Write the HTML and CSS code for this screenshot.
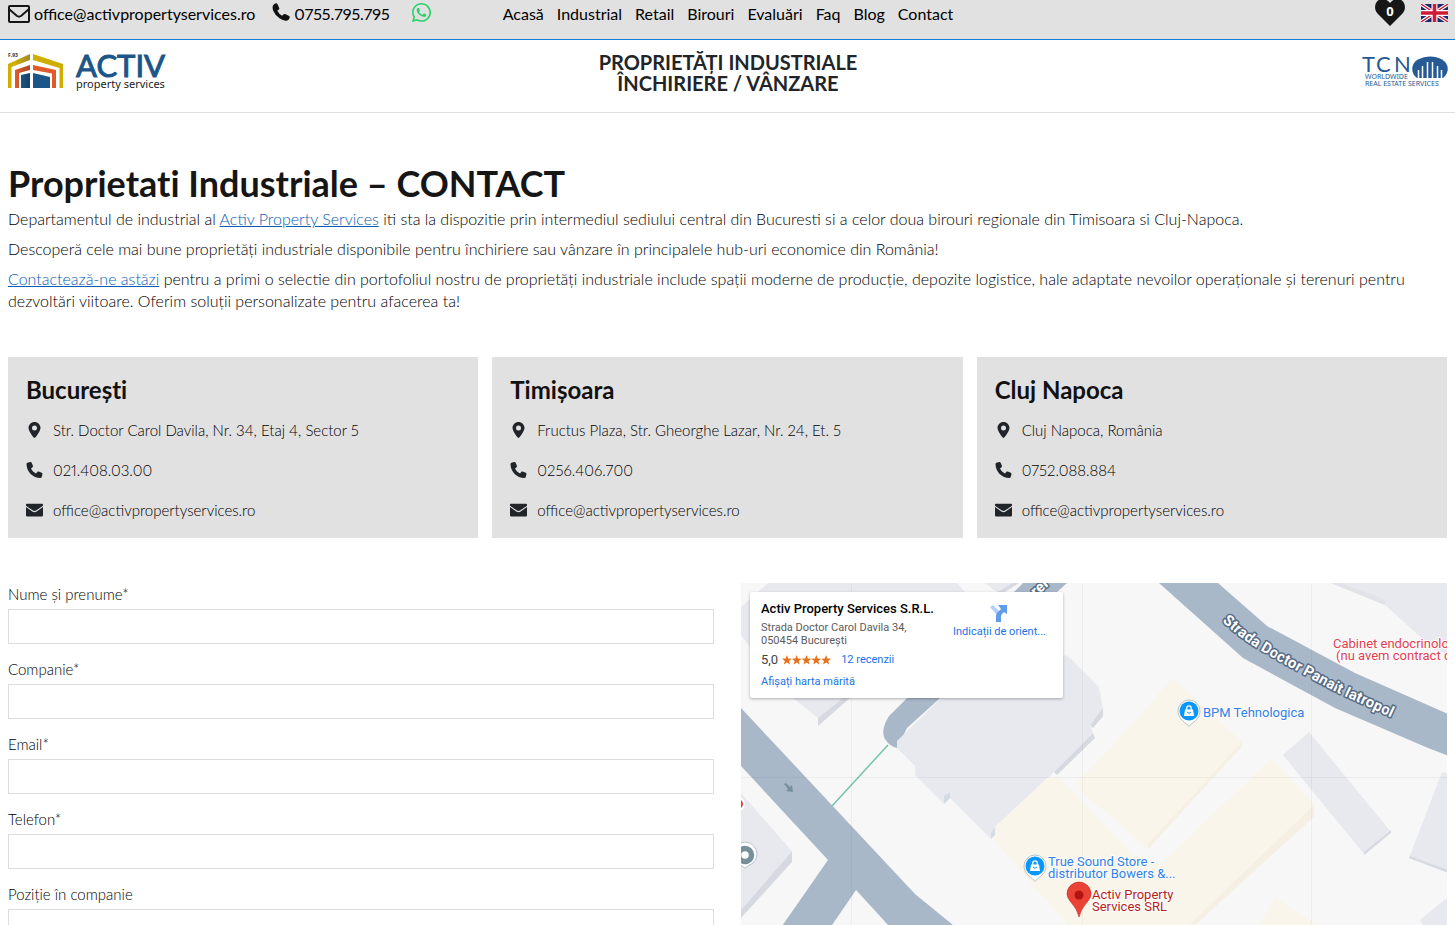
FILE: index.html
```html
<!DOCTYPE html>
<html lang="ro">
<head>
<meta charset="utf-8">
<meta name="viewport" content="width=device-width, initial-scale=1">
<title>Proprietati Industriale – Contact</title>
<link rel="stylesheet" href="styles.css">
</head>
<body>
<svg class="defs" aria-hidden="true">
  <symbol id="phone" viewBox="0 0 512 512"><path d="M164.900 24.600c-7.700-18.600-28-28.500-47.400-23.200l-88 24C12.100 30.200 0 46 0 64c0 247.400 200.600 448 448 448 18 0 33.800-12.100 38.600-29.500l24-88c5.300-19.400-4.600-39.700-23.200-47.400l-96-40c-16.300-6.800-35.200-2.100-46.300 11.600L304.700 368C234.300 334.700 177.300 277.700 144 207.300l49.300-40.300c13.700-11.200 18.400-30 11.600-46.300z"/></symbol>
  <symbol id="handset" viewBox="0 0 18 18"><path d="M1 2.500Q2 .5 4 .3q1-.1 1.400.8l1.800 3.900q.4.900-.3 1.500L5.300 7.800q1.500 3.200 4.900 5l1.500-1.500q.6-.6 1.400-.2l4 2q.8.400.6 1.400-.5 2.300-2.500 3-3.200 1-7.700-2.200Q3 12 1.200 7.700.1 4.500 1 2.500z"/></symbol>
  <symbol id="pin" viewBox="0 0 384 512"><path fill-rule="evenodd" d="M215.700 499.200C267 435 384 279.400 384 192 384 86 298 0 192 0S0 86 0 192c0 87.400 117 243 168.300 307.200 12.300 15.300 35.100 15.300 47.400 0zM192 112a80 80 0 1 1 0 160 80 80 0 0 1 0-160z"/></symbol>
  <symbol id="mail" viewBox="0 0 512 384"><path d="M24 0Q0 0 0 24v38l210 148q46 30 92 0L512 62V24q0-24-24-24zM0 100v260q0 24 24 24h464q24 0 24-24V100L322 236q-66 42-132 0z"/></symbol>
  <symbol id="shop" viewBox="0 0 24 28"><path d="M12 27.500C10.500 24.500 1 21 1 12a11 11 0 0 1 22 0c0 9-9.500 12.500-11 15.500z" fill="#fff" stroke="#b9c3cc" stroke-width="1"/><circle cx="12" cy="12" r="9.500" fill="#0a96fa"/><path d="M8 10.500h8l1 6.500H7z" fill="#fff"/><path d="M9.800 11V9a2.200 2.200 0 0 1 4.400 0v2" fill="none" stroke="#fff" stroke-width="1.300"/><path d="M10 13q2 2.500 4 0" fill="none" stroke="#0a96fa"/></symbol>
</svg>

<header>
  <div class="topbar">
    <div class="contacts">
      <a class="contact-link" href="mailto:office@activpropertyservices.ro">
        <svg class="i-mail" viewBox="0 0 22 20"><rect x="1" y="2" width="20" height="16" rx="1"/><path d="M1.500 5.500l7.500 6.500q2 1.300 4 0l7.500-6.500"/></svg>
        <span>office@activpropertyservices.ro</span>
      </a>
      <a class="contact-link" href="tel:0755795795">
        <svg class="i-phone"><use href="#handset"/></svg>
        <span>0755.795.795</span>
      </a>
      <a class="whatsapp" href="#wa" aria-label="WhatsApp">
        <svg viewBox="0 0 448 448"><path fill="#25d366" d="M380.900 65.100C339 23.100 283.200 0 223.900 0 101.500 0 1.900 99.600 1.900 222c0 39.100 10.200 77.300 29.600 111L0 448l117.700-30.900c32.400 17.700 68.900 27 106.100 27h.1c122.300 0 224.100-99.600 224.100-222 0-59.300-25.200-115-67.100-157zM223.900 406.700c-33.200 0-65.700-8.900-94-25.700l-6.700-4-69.800 18.300L72 327.200l-4.400-7c-18.500-29.400-28.200-63.300-28.200-98.200 0-101.700 82.800-184.500 184.600-184.500 49.300 0 95.600 19.200 130.400 54.100s56.200 81.200 56.100 130.500c0 101.800-84.900 184.600-186.600 184.600zm101.200-138.200c-5.500-2.800-32.800-16.200-37.900-18-5.100-1.900-8.800-2.800-12.500 2.800s-14.300 18-17.600 21.800c-3.200 3.700-6.500 4.200-12 1.400-32.600-16.300-54-29.100-75.500-66-5.700-9.800 5.700-9.100 16.300-30.300 1.800-3.700.9-6.900-.5-9.700s-12.500-30.100-17.100-41.200c-4.500-10.800-9.100-9.300-12.500-9.500-3.200-.2-6.900-.2-10.600-.2s-9.700 1.400-14.800 6.900c-5.100 5.600-19.400 19-19.400 46.300s19.900 53.700 22.600 57.400c2.800 3.700 39.100 59.700 94.800 83.800 35.200 15.200 49 16.500 66.600 13.900 10.700-1.600 32.800-13.400 37.400-26.400s4.600-24.100 3.200-26.400c-1.300-2.500-5-3.900-10.500-6.600z"/></svg>
      </a>
    </div>
    <nav class="menu">
      <a href="#acasa">Acasă</a><a href="#industrial">Industrial</a><a href="#retail">Retail</a><a href="#birouri">Birouri</a><a href="#evaluari">Evaluări</a><a href="#faq">Faq</a><a href="#blog">Blog</a><a href="#contact">Contact</a>
    </nav>
    <div class="tools">
      <a class="heart" href="#favorite" aria-label="Favorite">
        <svg viewBox="0 0 30 26"><path fill="#161616" d="M15 26L2.500 13.500C-1 10-.5 4 2.500 1S11-2 15 3c4-5 9.500-5 12.500-2s3.500 9 0 12.500z"/><text class="heart-count" x="15" y="16" text-anchor="middle">0</text></svg>
      </a>
      <a class="flag" href="#en" aria-label="English">
        <svg viewBox="0 0 27 18"><path fill="#1b2a6b" d="M0 0h27v18H0z"/><path stroke="#fff" stroke-width="3.600" d="M0 0l27 18M27 0L0 18"/><path stroke="#cf1b36" stroke-width="1.400" d="M0 0l27 18M27 0L0 18"/><path stroke="#fff" stroke-width="6" d="M13.500 0v18M0 9h27"/><path stroke="#cf1b36" stroke-width="3.600" d="M13.500 0v18M0 9h27"/></svg>
      </a>
    </div>
  </div>
  <div class="brandbar">
    <a class="logo" href="#acasa" aria-label="Activ Property Services">
      <svg viewBox="0 0 160 40">
        <defs>
          <linearGradient id="gold"><stop offset="0" stop-color="#cfae00"/><stop offset=".3" stop-color="#cfae00"/><stop offset="1" stop-color="#a08a28"/></linearGradient>
          <linearGradient id="rust"><stop offset="0" stop-color="#e05a2b"/><stop offset="1" stop-color="#a9492a"/></linearGradient>
          <linearGradient id="navy"><stop offset="0" stop-color="#1c5587"/><stop offset="1" stop-color="#173f63"/></linearGradient>
        </defs>
        <path fill="url(#gold)" d="M0 12L22 2v6L3.500 15v21H0z"/>
        <path fill="#cfae00" d="M25 2l30 10v24h-3.500V16L25 8z"/>
        <path fill="url(#rust)" d="M7 18l15-5v5l-11 3v15H7z"/>
        <path fill="#e05a2b" d="M25 13l23 5v18h-4V21.500L25 18z"/>
        <path fill="url(#navy)" d="M13 23l9-2v15h-9z"/>
        <path fill="#1c5587" d="M25 21l17 4v11H25z"/>
        <text class="logo-year" x="0" y="5">F.93</text>
        <text class="logo-name" x="68" y="25">ACTIV</text>
        <text class="logo-sub" x="68" y="36">property services</text>
      </svg>
    </a>
    <div class="tagline">PROPRIETĂȚI INDUSTRIALE<br>ÎNCHIRIERE / VÂNZARE</div>
    <a class="tcn" href="#tcn" aria-label="TCN Worldwide">
      <svg viewBox="0 0 88 36">
        <text class="tcn-name" x="2" y="20">T</text><text class="tcn-name" x="16" y="20">C</text><text class="tcn-name" x="34" y="20">N</text>
        <path fill="#265a94" d="M57 26C50 21 51 11 58 7.500c8-4 17-4 24 0 7 4 8 13 1 18.500z"/>
        <path stroke="#fff" stroke-width="1.500" fill="none" d="M58.500 27V18M62.500 27V14M67.500 27V10M72.500 27V10M77.500 27V14M81.500 27V18"/>
        <text class="tcn-sub" x="5" y="27">WORLDWIDE</text>
        <text class="tcn-sub" x="5" y="34">REAL ESTATE SERVICES</text>
      </svg>
    </a>
  </div>
</header>

<main>
  <section class="intro">
    <h1>Proprietati Industriale – CONTACT</h1>
    <p>Departamentul de industrial al <a href="#aps">Activ Property Services</a> iti sta la dispozitie prin intermediul sediului central din Bucuresti si a celor doua birouri regionale din Timisoara si Cluj-Napoca.</p>
    <p>Descoperă cele mai bune proprietăți industriale disponibile pentru închiriere sau vânzare în principalele hub-uri economice din România!</p>
    <p><a href="#contact">Contactează-ne astăzi</a> pentru a primi o selectie din portofoliul nostru de proprietăți industriale include spații moderne de producție, depozite logistice, hale adaptate nevoilor operaționale și terenuri pentru dezvoltări viitoare. Oferim soluții personalizate pentru afacerea ta!</p>
  </section>

  <section class="offices">
    <article class="office">
      <h2>București</h2>
      <ul>
        <li><svg><use href="#pin"/></svg>Str. Doctor Carol Davila, Nr. 34, Etaj 4, Sector 5</li>
        <li><svg><use href="#phone"/></svg>021.408.03.00</li>
        <li><svg><use href="#mail"/></svg>office@activpropertyservices.ro</li>
      </ul>
    </article>
    <article class="office">
      <h2>Timișoara</h2>
      <ul>
        <li><svg><use href="#pin"/></svg>Fructus Plaza, Str. Gheorghe Lazar, Nr. 24, Et. 5</li>
        <li><svg><use href="#phone"/></svg>0256.406.700</li>
        <li><svg><use href="#mail"/></svg>office@activpropertyservices.ro</li>
      </ul>
    </article>
    <article class="office">
      <h2>Cluj Napoca</h2>
      <ul>
        <li><svg><use href="#pin"/></svg>Cluj Napoca, România</li>
        <li><svg><use href="#phone"/></svg>0752.088.884</li>
        <li><svg><use href="#mail"/></svg>office@activpropertyservices.ro</li>
      </ul>
    </article>
  </section>

  <section class="reach">
    <form class="form">
      <div class="field"><label for="nume">Nume și prenume*</label><input id="nume" type="text"></div>
      <div class="field"><label for="companie">Companie*</label><input id="companie" type="text"></div>
      <div class="field"><label for="email">Email*</label><input id="email" type="email"></div>
      <div class="field"><label for="telefon">Telefon*</label><input id="telefon" type="tel"></div>
      <div class="field"><label for="pozitie">Poziție în companie</label><input id="pozitie" type="text"></div>
    </form>
    <div class="map">
      <svg class="map-canvas" role="img" aria-label="Hartă">
        <g fill="#e8e9ef">
          <path d="M27 0H216l14 16L9 64 0 52V24zM52 115l25 20 25-20zM244 0l12 9 16-9z"/>
          <path d="M0 210l51 58-51 59z"/>
          <path d="M590 0l54 22 50 45 60 20V0z"/>
          <path d="M542 172l26-23 82 100-27 22z"/>
          <path d="M701 189l60 20v100l-93-34zM707 314l-28 23 3 6 25 30z"/>
        </g>
        <g fill="#d7d9e1">
          <path d="M77 135l25-20h7l-32 28zM51 268v11L0 335v-8zM256 9l16-9h6l-14 9zM623 269l27-22v3l-27 22zM668 275l1-2 38 14v3z"/>
        </g>
        <path fill="#e2e3e9" d="M590 0h10l45 17-1 5z"/>
        <path fill="#a9b8c9" d="M0 125l174 186 38 31 78 60h-88l-87-95-65 95H0l87-125L0 183z"/>
        <path fill="#a9b8c9" d="M282 0L148 133q-9 14-4 23 5 8 12 9l10-20L326 0z"/>
        <path fill="#a9b8c9" d="M418 0l84 75 92 50 93 40 80 30v-40l-60-24-93-41-88-47L477 0z"/>
        <path fill="#e8e9ef" d="M156 158l44-43 122-43 5 1 31 31 4 22-8 9-5 7 3 8-39 39-59 55-4 12-41-41-6 6-29-29v-9l-18-18z"/>
        <path fill="#d7d9e1" d="M313 189l39-39 2 5-38 37zM349 142l13-17v8l-10 12z"/>
        <path fill="#d3dce5" d="M203 221v-8l6-4v6zM250 256v-6l4-6v8z"/>
        <g fill="#f9f5ea">
          <path d="M306 195h13l73 77 29 8 110-105 42 47v12L454 342l-60 60h-14L254 259v-15z"/>
          <path d="M432 95l69 64v4l-94 103-53-46-13-11q-5-7-3-12l16-15z"/>
          <path d="M534 314l60 40-80 60-10-45z"/>
        </g>
        <path fill="#f5f0e3" d="M573 222v12L454 342l-60 60h-14l68-60zM501 159v4l-94 103v-5z"/>
        <path stroke="#74c3ae" stroke-width="1.500" d="M91 223l56-61"/>
        <path stroke="#000" stroke-opacity=".04" d="M110.500 0v500M341.500 0v500M570.500 0v500M0 194.500h1000"/>
        <path fill="#78909c" d="M43 201l2-1 4 4 2-2 1 7-7-1 2-2z"/>
        <circle cx="-3" cy="221" r="6" fill="#e8384a" stroke="#fff" stroke-width="2"/>
        <path d="M4 285l-8-5a12 12 0 1 1 16 0z" fill="#fff" stroke="#b9c3cc"/>
        <circle cx="4" cy="272" r="6.500" fill="#fff" stroke="#78909c" stroke-width="5.500"/>
        <path id="street" fill="none" d="M481 38Q498 54 514 64T556 88L597 110 680 148"/>
        <text class="street-name"><textPath href="#street">Strada Doctor Panait Iatropol</textPath></text>
        <text class="street-name" transform="translate(295 14) rotate(-42)">rei</text>
        <use href="#shop" x="436" y="116" width="24" height="28"/>
        <use href="#shop" x="282" y="271" width="24" height="28"/>
        <g class="poi poi-blue"><text x="462" y="134">BPM Tehnologica</text><text x="307" y="283">True Sound Store -</text><text x="307" y="295">distributor Bowers &amp;...</text></g>
        <g class="poi poi-red"><text x="592" y="65">Cabinet endocrinologie</text><text x="595" y="77">(nu avem contract cu</text></g>
        <g class="poi poi-dark"><text x="351" y="316">Activ Property</text><text x="351" y="328">Services SRL</text></g>
        <path d="M338 334q-2-8-7-13.500-5-5.500-5-9.500a12 12 0 0 1 24 0q0 4-5 9.500-5 5.500-7 13.500z" fill="#ea4335" stroke="#c5221f" stroke-width=".6"/>
        <circle cx="338" cy="312" r="4.500" fill="#b31412"/>
      </svg>
      <div class="place">
        <div class="place-info">
          <strong>Activ Property Services S.R.L.</strong>
          <address>Strada Doctor Carol Davila 34,<br>050454 București</address>
          <div class="rating"><span>5,0</span>
            <svg viewBox="0 0 50 10"><defs><path id="star" d="M5 0l1.300 3.400 3.700.2-2.900 2.300 1 3.600L5 7.500 1.900 9.500l1-3.600L0 3.600l3.700-.2z"/></defs><g fill="#e7711b"><use href="#star"/><use href="#star" x="10"/><use href="#star" x="20"/><use href="#star" x="30"/><use href="#star" x="40"/></g></svg>
            <a href="#recenzii">12 recenzii</a></div>
          <a href="#harta">Afișați harta mărită</a>
        </div>
        <a class="directions" href="#traseu">
          <svg viewBox="0 0 18 18"><path fill="#b4d0f7" d="M0 3l3-2 7 7-3 3z"/><path fill="#5f9ceb" d="M6 18v-6q0-2 2-4l3-3-3-4h9v9l-3-2-2 2q-1 1-1 3v5z"/></svg>
          <span>Indicații de orient...</span>
        </a>
      </div>
    </div>
  </section>
</main>
</body>
</html>
```
FILE: styles.css
```css
* { box-sizing: border-box; }
html { height: 100%; }
body {
  margin: 0;
  height: 100vh;
  overflow-y: auto;
  scrollbar-width: none;
  background: #fff;
  color: #000;
  font: 300 15px/22px Lato, "Open Sans", sans-serif;
  font-variant-numeric: proportional-nums;
}
a { color: inherit; text-decoration: none; }
.defs { position: absolute; width: 0; height: 0; }

.topbar {
  display: grid;
  grid-template-columns: 1fr auto 1fr;
  height: 40px;
  padding: 0 7px 0 8px;
  background: #e1e1e1;
  border-bottom: 1px solid #137ce0;
  font-weight: 400;
  font-size: 16px;
}
.contacts { display: flex; align-items: flex-start; padding-top: 3px; }
.contact-link { display: flex; gap: 4px; margin-right: 17px; }
.i-mail { width: 22px; height: 22px; fill: none; stroke: #161616; stroke-width: 2; }
.i-phone { width: 18px; height: 18px; fill: #111; }
.whatsapp { margin-left: 5px; }
.whatsapp svg { display: block; width: 19px; height: 19px; }
.menu { display: flex; gap: 13px; padding-top: 3px; }
.tools { display: flex; justify-content: flex-end; gap: 16px; }
.heart svg { display: block; width: 30px; height: 26px; }
.heart-count { font: 700 13px "Open Sans", sans-serif; fill: #fff; }
.flag { padding-top: 4px; }
.flag svg { display: block; width: 27px; height: 18px; }

.brandbar {
  display: grid;
  grid-template-columns: 1fr auto 1fr;
  height: 73px;
  padding: 12px 7px 0 8px;
  border-bottom: 1px solid #dedede;
}
.brandbar svg { display: block; overflow: visible; }
.logo svg { width: 160px; height: 40px; }
.logo-year { font: 700 5px "Open Sans", sans-serif; fill: #333; }
.logo-name { font: 400 31px Lato, sans-serif; fill: #1c5587; stroke: #1c5587; stroke-width: 1; }
.logo-sub { font: 400 11px "Noto Sans", sans-serif; fill: #222; }
.tagline { color: #212529; font-weight: 700; font-size: 20px; line-height: 21px; text-align: center; }
.tcn { justify-self: end; }
.tcn svg { width: 88px; height: 36px; }
.tcn-name { font: 400 22px Lato, sans-serif; fill: #265a94; }
.tcn-sub { font: 400 7px "Noto Sans", sans-serif; fill: #265a94; }

main { padding: 50px 8px 0; }
h1, h2 { font-variant-ligatures: none; }
h1 { margin: 0; color: #161616; font-weight: 700; font-size: 36px; line-height: 40px; }
.intro { margin-bottom: 45px; }
.intro p { margin: 0 0 8px; font-size: 16px; }
.intro h1 + p { margin-top: 5px; }
.intro a { color: #0b5cb0; text-decoration: underline; }

.offices { display: grid; grid-template-columns: repeat(3, 1fr); gap: 14px; margin-bottom: 45px; }
.office { padding: 19px 18px 17px; background: #e1e1e1; }
.office h2 { margin: 0 0 16px; color: #111; font-weight: 700; font-size: 24px; line-height: 27px; }
.office ul { display: grid; gap: 18px; margin: 0; padding: 0; list-style: none; }
.office li { display: flex; align-items: center; gap: 10px; }
.office li svg { width: 17px; height: 16px; fill: #212529; }

.reach { display: grid; grid-template-columns: 1fr 1fr; gap: 27px; }
.field { display: grid; gap: 3px; margin-bottom: 14px; }
.field label { line-height: 23px; }
.field input { width: 100%; height: 35px; padding: 4px 8px; border: 1px solid #dcdcdc; background: #fff; font: inherit; }
.map { position: relative; overflow: hidden; min-height: 400px; background: #f7f7f7; }
.map-canvas { position: absolute; width: 100%; height: 100%; }
.street-name { font: 700 15px Roboto, sans-serif; fill: #fff; stroke: #566b84; stroke-width: 3px; stroke-linejoin: round; paint-order: stroke; }
.poi { font: 400 13px Roboto, sans-serif; stroke: #fff; stroke-width: 2px; paint-order: stroke; }
.poi-blue { fill: #3080e8; }
.poi-red { fill: #e23d50; }
.poi-dark { fill: #b71c1c; }

.place {
  position: absolute;
  top: 9px;
  left: 9px;
  display: flex;
  justify-content: space-between;
  width: 313px;
  padding: 9px 17px 9px 11px;
  border-radius: 2px;
  background: #fff;
  box-shadow: 0 1px 3px rgba(0, 0, 0, .3);
  font: 400 11px/14px Roboto, sans-serif;
}
.place a { color: #1a73e8; }
.place strong { display: block; margin-bottom: 4px; color: #000; font-weight: 500; font-size: 13px; line-height: 16px; }
.place address { color: #5b5b5b; font-style: normal; line-height: 13px; }
.rating { display: flex; align-items: center; gap: 4px; margin: 6px 0 8px; }
.rating span { color: #444; font-size: 13px; }
.rating svg { width: 49px; height: 10px; }
.rating a { margin-left: 6px; }
.directions { display: flex; flex-direction: column; align-items: center; gap: 3px; padding-top: 3px; }
.directions svg { width: 18px; height: 18px; }
```
